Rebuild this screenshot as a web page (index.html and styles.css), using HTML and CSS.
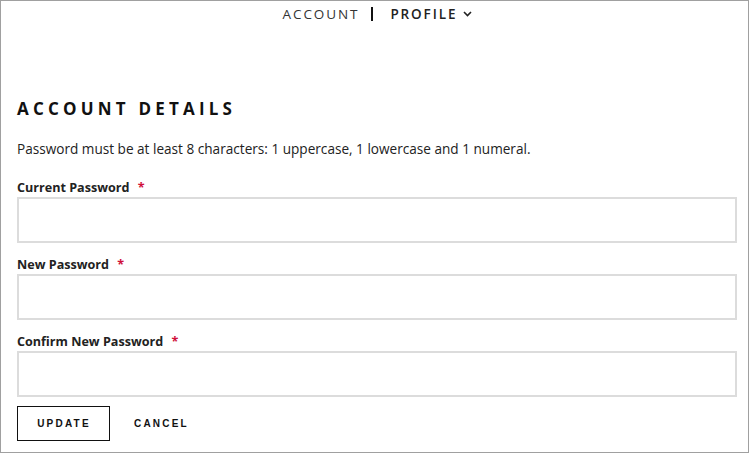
FILE: index.html
```html
<!DOCTYPE html>
<html>
<head>
<meta charset="utf-8">
<link rel="stylesheet" href="styles.css">
</head>
<body>
<div class="frame">
  <nav class="nav">
    <span class="nav-link">ACCOUNT</span>
    <span class="nav-sep"></span>
    <span class="nav-link nav-active">PROFILE
      <svg class="chev" width="9" height="6" viewBox="0 0 9 6"><path d="M1 1l3.5 3.5L8 1" fill="none" stroke="#222" stroke-width="1.6"/></svg>
    </span>
  </nav>
  <main class="content">
    <h1 class="title">ACCOUNT DETAILS</h1>
    <p class="hint">Password must be at least 8 characters: 1 uppercase, 1 lowercase and 1 numeral.</p>
    <div class="field">
      <label class="label">Current Password <span class="req">*</span></label>
      <input class="input" type="password">
    </div>
    <div class="field">
      <label class="label">New Password <span class="req">*</span></label>
      <input class="input" type="password">
    </div>
    <div class="field">
      <label class="label">Confirm New Password <span class="req">*</span></label>
      <input class="input" type="password">
    </div>
    <div class="actions">
      <button class="btn btn-primary">UPDATE</button>
      <button class="btn btn-link">CANCEL</button>
    </div>
  </main>
</div>
</body>
</html>
```
FILE: styles.css
```css
html, body {
  margin: 0;
  padding: 0;
  background: #fff;
}
.frame {
  box-sizing: border-box;
  width: 749px;
  height: 453px;
  border: 1px solid #a0a0a0;
  font-family: "Open Sans", sans-serif;
  color: #222;
  overflow: hidden;
}
.nav {
  display: flex;
  justify-content: center;
  align-items: center;
  height: 26px;
  padding-left: 6px;
}
.nav-link {
  font-size: 13.5px;
  letter-spacing: 1.9px;
  color: #333;
  font-weight: 400;
  display: flex;
  align-items: center;
}
.nav-active {
  font-weight: 600;
  color: #222;
}
.nav-sep {
  width: 2px;
  height: 14px;
  background: #111;
  margin: 0 17px 0 12px;
}
.chev {
  margin-left: 6px;
}
.content {
  padding: 0 11px 0 16px;
}
.title {
  margin: 70px 0 0;
  font-size: 17px;
  font-weight: 700;
  letter-spacing: 4.2px;
  color: #111;
  line-height: 24px;
}
.hint {
  margin: 18px 0 0;
  font-size: 13.6px;
  line-height: 20px;
  color: #222;
}
.hint + .field {
  margin-top: 18px;
}
.field {
  display: flex;
  flex-direction: column;
}
.field + .field {
  margin-top: 11px;
}
.label {
  font-size: 12.6px;
  font-weight: 700;
  line-height: 19px;
  padding-top: 1px;
  color: #222;
}
.req {
  color: #d0103a;
  margin-left: 5px;
}
.input {
  box-sizing: border-box;
  height: 46px;
  width: 720px;
  border: 2px solid #dcdcdc;
  margin: 0;
  padding: 0 10px;
  background: #fff;
}
.actions {
  display: flex;
  align-items: center;
  margin-top: 9px;
}
.btn {
  font-family: "Liberation Sans", Arial, sans-serif;
  font-size: 10px;
  font-weight: 700;
  letter-spacing: 2.2px;
  background: #fff;
  color: #111;
  cursor: pointer;
}
.btn-primary {
  box-sizing: border-box;
  width: 93px;
  height: 35px;
  border: 1px solid #111;
  padding: 0 0 0 1px;
}
.btn-link {
  border: none;
  padding: 0;
  margin-left: 24px;
}
```
